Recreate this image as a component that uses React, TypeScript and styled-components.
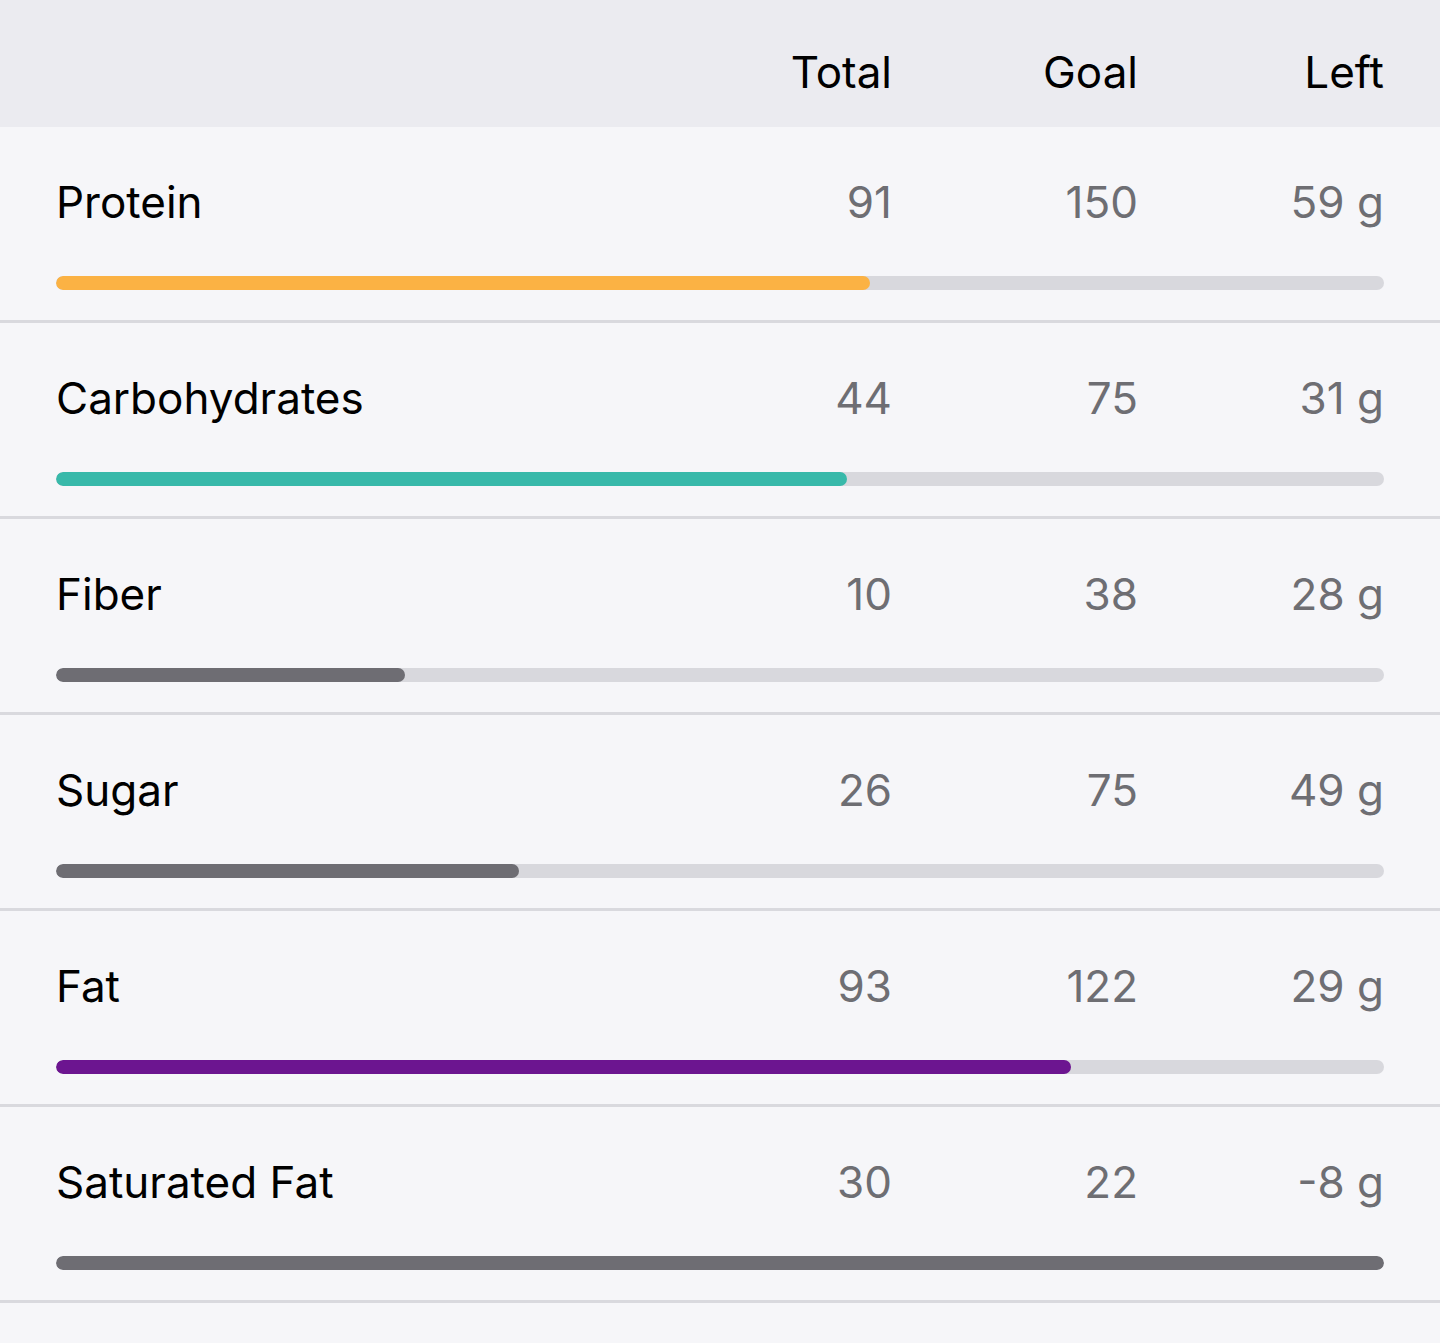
import React from "react";
import styled, { createGlobalStyle } from "styled-components";

const GlobalStyle = createGlobalStyle`
  html, body {
    margin: 0;
    padding: 0;
    background: #f6f6f9;
  }
  body {
    font-family: Inter, "Noto Sans", sans-serif;
  }
`;

const Table = styled.div`
  width: 1440px;
  background: #f6f6f9;
`;

const Columns = styled.div`
  display: grid;
  grid-template-columns: 1fr 240px 246px 246px;
  align-items: baseline;
`;

const Header = styled(Columns)`
  height: 127px;
  box-sizing: border-box;
  padding: 44px 56px 0 56px;
  background: #ebebf0;
  align-items: start;
`;

const HeadCell = styled.div`
  font-size: 44px;
  line-height: 56px;
  color: #000;
  text-align: right;
`;

const Row = styled.div`
  box-sizing: border-box;
  height: 196px;
  padding: 47px 56px 0 56px;
  border-bottom: 3px solid #d9d9de;
`;

const Label = styled.div`
  font-size: 44px;
  line-height: 56px;
  color: #000;
`;

const Value = styled.div`
  font-size: 44px;
  line-height: 56px;
  color: #6e6e73;
  text-align: right;
`;

const Track = styled.div`
  margin-top: 46px;
  height: 14px;
  border-radius: 7px;
  background: #d8d8dd;
  overflow: hidden;
`;

const Fill = styled.div<{ $color: string }>`
  height: 100%;
  border-radius: 7px;
  background: ${(p) => p.$color};
`;

// progress comes from the unrounded totals, so it's kept next to the shown numbers
const nutrients = [
  { name: "Protein", total: 91, goal: 150, progress: 0.613, color: "#fbb244" },
  { name: "Carbohydrates", total: 44, goal: 75, progress: 0.596, color: "#38b9aa" },
  { name: "Fiber", total: 10, goal: 38, progress: 0.263, color: "#6e6d73" },
  { name: "Sugar", total: 26, goal: 75, progress: 0.349, color: "#6e6d73" },
  { name: "Fat", total: 93, goal: 122, progress: 0.764, color: "#6c1590" },
  { name: "Saturated Fat", total: 30, goal: 22, progress: 1, color: "#6e6d73" },
];

const App: React.FC = () => {
  return (
    <Table>
      <GlobalStyle />
      <Header>
        <div />
        <HeadCell>Total</HeadCell>
        <HeadCell>Goal</HeadCell>
        <HeadCell>Left</HeadCell>
      </Header>
      {nutrients.map((n) => {
        const pct = Math.min(n.progress, 1) * 100;
        return (
          <Row key={n.name}>
            <Columns>
              <Label>{n.name}</Label>
              <Value>{n.total}</Value>
              <Value>{n.goal}</Value>
              <Value>{n.goal - n.total} g</Value>
            </Columns>
            <Track>
              <Fill $color={n.color} style={{ width: `${pct}%` }} />
            </Track>
          </Row>
        );
      })}
    </Table>
  );
};

export default App;
